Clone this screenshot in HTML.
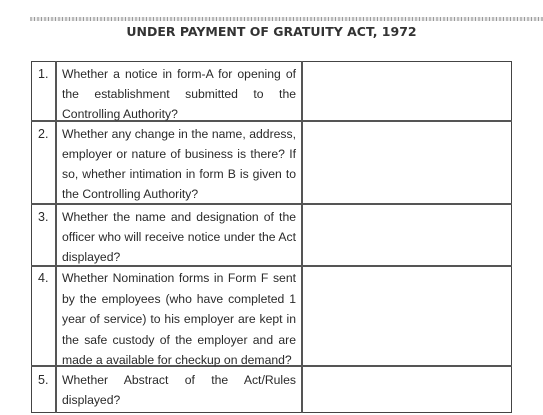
<!DOCTYPE html>
<html><head><style>
body{margin:0;width:543px;height:415px;background:#fff;position:relative;overflow:hidden;font-family:"Liberation Sans",sans-serif;color:#2a2a2a}
.band{position:absolute;left:30px;top:17px;width:513px;height:4px;background:repeating-linear-gradient(90deg,#bbb 0 2px,#e6e6e6 2px 4px,#999 4px 5px,#eee 5px 7px)}
.title{position:absolute;left:0;width:543px;top:24px;text-align:center;font-family:"DejaVu Sans",sans-serif;font-weight:bold;font-size:12.5px;color:#333}
.t{position:absolute;left:31px;top:61px;width:481px;height:352px;border:1.5px solid #444;box-sizing:border-box}
.h{position:absolute;left:31px;width:481px;height:1.5px;background:#555}
.v{position:absolute;top:61px;height:352px;width:1.5px;background:#555}
.n{position:absolute;left:38px;font-size:12.5px;line-height:20px}
.l{position:absolute;left:62px;width:234px;font-size:12.2px;line-height:20px;text-align:justify;text-align-last:justify;white-space:nowrap}
.l.s{text-align-last:left}
</style></head><body>
<div class="band"></div>
<div class="title">UNDER PAYMENT OF GRATUITY ACT, 1972</div>
<div class="t"></div>
<div class="v" style="left:55px"></div>
<div class="v" style="left:301px"></div>
<div class="h" style="top:120px"></div>
<div class="h" style="top:203px"></div>
<div class="h" style="top:265px"></div>
<div class="h" style="top:365px"></div>

<div class="n" style="top:64px">1.</div>
<div class="l" style="top:64px">Whether a notice in form-A for opening of</div>
<div class="l" style="top:84px">the&nbsp; establishment&nbsp; submitted&nbsp; to&nbsp; the</div>
<div class="l s" style="top:104px">Controlling Authority?</div>

<div class="n" style="top:124px">2.</div>
<div class="l" style="top:124px">Whether any change in the name, address,</div>
<div class="l" style="top:144px">employer or nature of business is there? If</div>
<div class="l" style="top:164px">so, whether intimation in form B is given to</div>
<div class="l s" style="top:184px">the Controlling Authority?</div>

<div class="n" style="top:207px">3.</div>
<div class="l" style="top:207px">Whether the name and designation of the</div>
<div class="l" style="top:227px">officer who will receive notice under the Act</div>
<div class="l s" style="top:247px">displayed?</div>

<div class="n" style="top:268px">4.</div>
<div class="l" style="top:268px">Whether Nomination forms in Form F sent</div>
<div class="l" style="top:288.5px">by the employees (who have completed 1</div>
<div class="l" style="top:309px">year of service) to his employer are kept in</div>
<div class="l" style="top:329.5px">the safe custody of the employer and are</div>
<div class="l s" style="top:350px">made a available for checkup on demand?</div>

<div class="n" style="top:370px">5.</div>
<div class="l" style="top:370px">Whether&nbsp; Abstract&nbsp; of&nbsp; the&nbsp; Act/Rules</div>
<div class="l s" style="top:390px">displayed?</div>
</body></html>
